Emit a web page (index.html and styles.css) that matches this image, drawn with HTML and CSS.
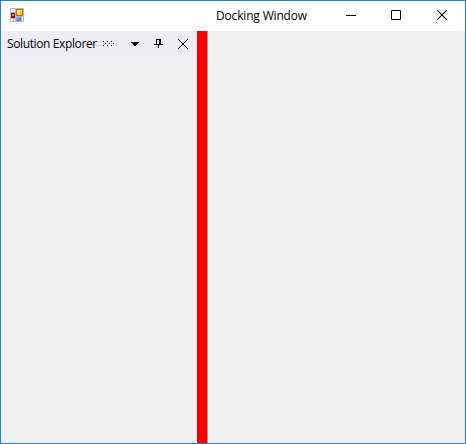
FILE: index.html
```html
<!DOCTYPE html>
<html lang="en">
<head>
<meta charset="utf-8">
<title>Docking Window</title>
<link rel="stylesheet" href="styles.css">
</head>
<body>
<div class="window">
  <header class="titlebar">
    <svg class="app-icon" width="14" height="14" viewBox="0 0 14 14" shape-rendering="crispEdges">
      <defs>
        <linearGradient id="gold" x1="0" y1="0" x2="1" y2="1"><stop offset="0" stop-color="#fff0a0"/><stop offset="1" stop-color="#f0b010"/></linearGradient>
        <linearGradient id="blue" x1="0" y1="0" x2="1" y2="1"><stop offset="0" stop-color="#9cc4ff"/><stop offset="1" stop-color="#2a66d8"/></linearGradient>
      </defs>
      <rect width="14" height="14" fill="#b9b9b9"/>
      <path d="M1 1h4v3H1zM1 11h2v2H1zM4 11h1v2H4zM12 9h1v4h-1z" fill="#fff"/>
      <path d="M6 1h7v7H6z" fill="#a87800"/>
      <path d="M7 2h5v5H7z" fill="url(#gold)"/>
      <path d="M1 5h4v5H1z" fill="#980c0c"/>
      <path d="M2 6h2v2H2z" fill="#e88070"/>
      <path d="M6 9h5v4H6z" fill="url(#blue)"/>
    </svg>
    <h1 class="title">Docking Window</h1>
    <div class="controls">
      <svg class="minimize" width="11" height="11" viewBox="0 0 11 11"><path d="M0 5.5h10" stroke="#000"/></svg>
      <svg class="maximize" width="11" height="11" viewBox="0 0 11 11"><path d="M.5 .5h9v9h-9z" fill="none" stroke="#000"/></svg>
      <svg width="11" height="11" viewBox="0 0 11 11"><path d="M.3 .3l9.4 9.4M9.7 .3L.3 9.7" stroke="#000" stroke-width="1.1"/></svg>
    </div>
  </header>
  <main class="workspace">
    <section class="panel">
      <div class="panel-header">
        <h2 class="panel-title">Solution Explorer</h2>
        <svg class="grip" width="11" height="5" viewBox="0 0 11 5" shape-rendering="crispEdges"><path d="M0 0h1v1H0zM4 0h1v1H4zM8 0h1v1H8zM2 2h1v1H2zM6 2h1v1H6zM10 2h1v1h-1zM0 4h1v1H0zM4 4h1v1H4zM8 4h1v1H8z"/></svg>
        <svg class="caret" width="8" height="4" viewBox="0 0 8 4" shape-rendering="crispEdges"><path d="M0 0h8v1H0zM1 1h6v1H1zM2 2h4v1H2zM3 3h2v1H3z"/></svg>
        <svg class="pin" width="9" height="9" viewBox="0 0 9 9" shape-rendering="crispEdges"><path d="M2 0h5v1H2zM2 1h1v4H2zM5 1h2v4H5zM0 5h9v1H0zM4 6h1v3H4z"/></svg>
        <svg class="close" width="10" height="10" viewBox="0 0 10 10"><path d="M0 0l10 10M10 0L0 10" stroke="#000"/></svg>
      </div>
    </section>
    <div class="splitter"></div>
    <section class="document"></section>
  </main>
</div>
</body>
</html>
```

FILE: styles.css
```css
body {
  margin: 0;
  font-family: "Open Sans", "Noto Sans", sans-serif;
  color: #000;
}

.window {
  box-sizing: border-box;
  width: 466px;
  height: 444px;
  display: flex;
  flex-direction: column;
  border: 1px solid #1883d7;
  background: #f0f0f0;
}

.titlebar {
  display: flex;
  flex: 0 0 30px;
  align-items: center;
  background: #fff;
}

.app-icon {
  margin-left: 9px;
  margin-bottom: 2px;
}

.title {
  margin: 0 0 0 192px;
  width: 92px;
  font-size: 12px;
  font-weight: 400;
  line-height: 16px;
  letter-spacing: -0.17px;
  white-space: nowrap;
}

.controls {
  display: flex;
  margin-left: 38px;
  margin-bottom: 1px;
}

.controls svg,
.panel-header svg {
  display: block;
  flex: none;
}

.minimize {
  margin-right: 34px;
}

.maximize {
  margin-right: 35px;
}

.workspace {
  display: flex;
  flex: 1;
}

.panel {
  flex: 0 0 196px;
}

.panel-header {
  display: flex;
  align-items: center;
  height: 26px;
  background: #eeeef2;
}

.panel-title {
  margin: 0 0 0 6px;
  width: 91px;
  font-size: 12px;
  font-weight: 400;
  line-height: 16px;
  letter-spacing: -0.38px;
  white-space: nowrap;
}

.grip {
  margin-left: 5px;
  margin-bottom: 1px;
}

.caret {
  margin-left: 17px;
}

.pin {
  margin-left: 15px;
  margin-bottom: 1px;
}

.close {
  margin-left: 15px;
}

.splitter {
  flex: 0 0 10px;
  background: #f00;
}

.document {
  flex: 1;
  border-left: 1px solid #a0a0a0;
}
```
